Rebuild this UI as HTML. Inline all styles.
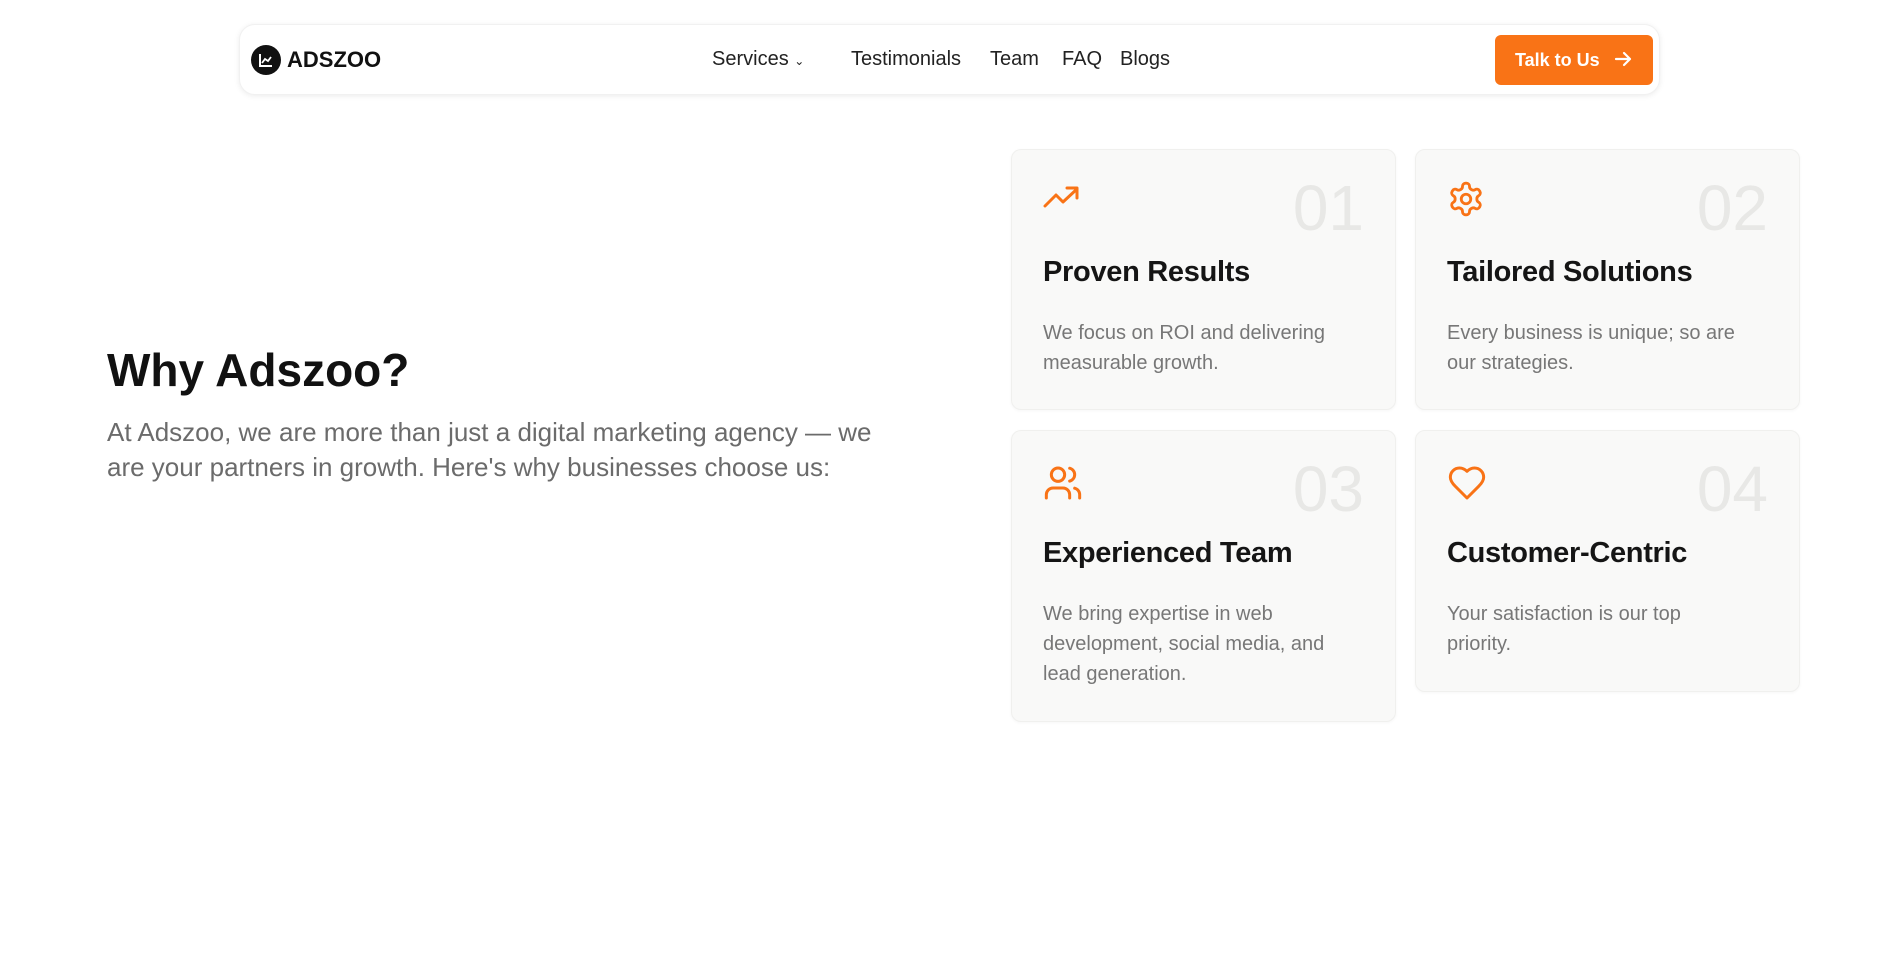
<!DOCTYPE html>
<html><head><meta charset="utf-8"><style>
*{box-sizing:border-box;margin:0;padding:0}
body{width:1897px;height:975px;background:#fff;font-family:"Liberation Sans",sans-serif;position:relative;overflow:hidden;color:#111}
.nav{position:absolute;left:239px;top:24px;width:1421px;height:71px;border-radius:16px;box-shadow:0 1px 6px rgba(0,0,0,.08);border:1px solid #f1f1f1;background:#fff}
.logo{position:absolute;left:11px;top:20px;width:30px;height:30px;border-radius:50%;background:#111}
.brand{position:absolute;left:47px;top:22px;font-size:22px;font-weight:bold;letter-spacing:0}
.links{position:absolute;top:23px;font-size:20px;color:#222}
.btn{position:absolute;left:1255px;top:10px;width:158px;height:50px;background:#f97316;border-radius:6px;color:#fff;font-weight:bold;font-size:18px;line-height:50px;padding-left:20px}
h1{position:absolute;left:107px;top:343px;font-size:46px;font-weight:bold;color:#111}
.lead{position:absolute;left:107px;top:415px;width:800px;font-size:26px;line-height:35px;color:#6b6b6b}
.card{position:absolute;background:#f9f9f8;border:1px solid #f0f0ee;border-radius:10px;box-shadow:0 1px 3px rgba(0,0,0,.04)}
.num{position:absolute;right:31px;top:26px;font-size:64px;color:#e8e8e6;line-height:1}
.icon{position:absolute;left:31px;top:34px}
.t{position:absolute;left:31px;top:106px;font-size:29px;color:#151515;font-weight:bold;letter-spacing:-0.3px}
.d{position:absolute;left:31px;top:168px;width:295px;font-size:20px;line-height:30px;color:#777}
</style></head><body>
<div class="nav">
 <div class="logo"><svg width="30" height="30" viewBox="0 0 30 30"><path d="M9 9v12h12" stroke="#fff" stroke-width="2" fill="none"/><path d="M11 18l3-4 3 2 3-4" stroke="#fff" stroke-width="1.8" fill="none"/></svg></div>
 <div class="brand">ADSZOO</div>
 <div class="links" style="left:472px">Services <span style="font-size:12px">⌄</span></div>
 <div class="links" style="left:611px">Testimonials</div>
 <div class="links" style="left:750px">Team</div>
 <div class="links" style="left:822px">FAQ</div>
 <div class="links" style="left:880px">Blogs</div>
 <div class="btn">Talk to Us <svg width="20" height="20" viewBox="0 0 20 20" style="vertical-align:-3px;margin-left:8px"><path d="M3 10h14M11 4l6 6-6 6" stroke="#fff" stroke-width="2.2" fill="none" stroke-linecap="round" stroke-linejoin="round"/></svg></div>
</div>
<h1>Why Adszoo?</h1>
<div class="lead">At Adszoo, we are more than just a digital marketing agency — we are your partners in growth. Here's why businesses choose us:</div>

<div class="card" style="left:1011px;top:149px;width:385px;height:261px">
 <svg class="icon" width="40" height="30" viewBox="0 0 40 30"><path d="M2 22l11-11 7 7 14-13M24 4h10v10" stroke="#f97316" stroke-width="3" fill="none" stroke-linecap="round" stroke-linejoin="round"/></svg>
 <div class="num">01</div><div class="t">Proven Results</div>
 <div class="d">We focus on ROI and delivering measurable growth.</div></div>
<div class="card" style="left:1415px;top:149px;width:385px;height:261px">
 <svg class="icon" style="top:30px" width="38" height="38" viewBox="0 0 24 24" fill="none" stroke="#f97316" stroke-width="1.8" stroke-linecap="round" stroke-linejoin="round"><path d="M12.22 2h-.44a2 2 0 0 0-2 2v.18a2 2 0 0 1-1 1.730l-.43.25a2 2 0 0 1-2 0l-.15-.08a2 2 0 0 0-2.73.73l-.22.38a2 2 0 0 0 .73 2.73l.15.1a2 2 0 0 1 1 1.72v.51a2 2 0 0 1-1 1.74l-.15.09a2 2 0 0 0-.73 2.73l.22.38a2 2 0 0 0 2.73.73l.15-.08a2 2 0 0 1 2 0l.43.25a2 2 0 0 1 1 1.73V20a2 2 0 0 0 2 2h.44a2 2 0 0 0 2-2v-.18a2 2 0 0 1 1-1.73l.43-.25a2 2 0 0 1 2 0l.15.08a2 2 0 0 0 2.73-.73l.22-.39a2 2 0 0 0-.73-2.73l-.15-.08a2 2 0 0 1-1-1.74v-.5a2 2 0 0 1 1-1.74l.15-.09a2 2 0 0 0 .73-2.73l-.22-.38a2 2 0 0 0-2.73-.73l-.15.08a2 2 0 0 1-2 0l-.43-.25a2 2 0 0 1-1-1.73V4a2 2 0 0 0-2-2z"/><circle cx="12" cy="12" r="3"/></svg>
 <div class="num">02</div><div class="t">Tailored Solutions</div>
 <div class="d">Every business is unique; so are our strategies.</div></div>
<div class="card" style="left:1011px;top:430px;width:385px;height:292px">
 <svg class="icon" style="top:32px" width="40" height="40" viewBox="0 0 24 24" fill="none" stroke="#f97316" stroke-width="1.8" stroke-linecap="round" stroke-linejoin="round"><path d="M16 21v-2a4 4 0 0 0-4-4H6a4 4 0 0 0-4 4v2"/><circle cx="9" cy="7" r="4"/><path d="M22 21v-2a4 4 0 0 0-3-3.87M16 3.13a4 4 0 0 1 0 7.75"/></svg>
 <div class="num">03</div><div class="t">Experienced Team</div>
 <div class="d">We bring expertise in web development, social media, and lead generation.</div></div>
<div class="card" style="left:1415px;top:430px;width:385px;height:262px">
 <svg class="icon" style="top:32px" width="40" height="40" viewBox="0 0 24 24" fill="none" stroke="#f97316" stroke-width="1.8" stroke-linecap="round" stroke-linejoin="round"><path d="M19 14c1.49-1.46 3-3.21 3-5.5A5.5 5.5 0 0 0 16.5 3c-1.76 0-3 .5-4.5 2-1.5-1.5-2.740-2-4.5-2A5.5 5.5 0 0 0 2 8.5c0 2.3 1.5 4.05 3 5.5l7 7z"/></svg>
 <div class="num">04</div><div class="t">Customer-Centric</div>
 <div class="d">Your satisfaction is our top priority.</div></div>
</body></html>
